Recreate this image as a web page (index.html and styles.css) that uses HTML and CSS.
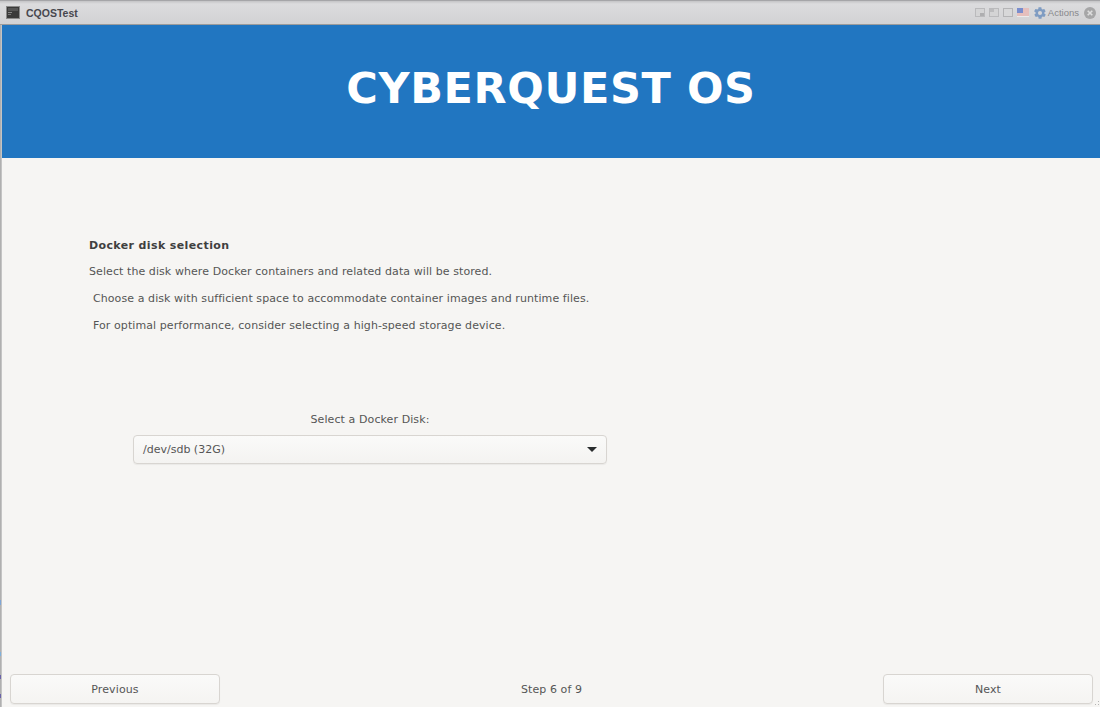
FILE: index.html
```html
<!DOCTYPE html>
<html lang="en">
<head>
<meta charset="utf-8">
<title>CQOSTest</title>
<link rel="stylesheet" href="styles.css">
</head>
<body>
<div class="window">
  <header class="titlebar">
    <div class="title-left">
      <svg class="app-icon" width="14" height="13" viewBox="0 0 14 13"><rect x=".5" y=".5" width="13" height="12" fill="#3a3a3a" stroke="#8a8a8a"/><rect x="2" y="2" width="10" height="3" fill="#555"/><rect x="2" y="6" width="4" height="1" fill="#888"/><rect x="2" y="8" width="3" height="1" fill="#777"/></svg>
      <span class="app-name">CQOSTest</span>
    </div>
    <div class="title-right">
      <svg class="win-icon" width="10" height="9" viewBox="0 0 10 9"><rect x=".5" y=".5" width="9" height="8" fill="#d4d4d5" stroke="#bababc"/><rect x="5" y="5" width="4" height="3" fill="#aeaeb0"/></svg>
      <svg class="win-icon" width="10" height="9" viewBox="0 0 10 9"><rect x=".5" y=".5" width="9" height="8" fill="#d4d4d5" stroke="#bababc"/><rect x="1" y="1" width="4" height="3" fill="#bcbcbe"/></svg>
      <svg class="win-icon" width="10" height="9" viewBox="0 0 10 9"><rect x=".5" y=".5" width="9" height="8" fill="#d8d8d9" stroke="#b4b4b6"/></svg>
      <svg class="flag" width="12" height="9" viewBox="0 0 12 9"><rect width="12" height="9" fill="#eee"/><path d="M0 1h12M0 3h12M0 5h12M0 7h12" stroke="#e08c86" stroke-width="1"/><rect width="6" height="5" fill="#7085cc"/></svg>
      <svg class="gear" width="14" height="14" viewBox="0 0 24 24"><path fill="#7f9cc2" d="M19.4 13c.1-.3.1-.7.1-1s0-.7-.1-1l2.100-1.600c.2-.1.2-.4.1-.6l-2-3.400c-.1-.2-.4-.3-.6-.2l-2.500 1c-.5-.4-1.100-.7-1.700-1l-.4-2.700c0-.3-.2-.5-.5-.5h-4c-.3 0-.5.2-.5.4l-.4 2.700c-.6.2-1.100.6-1.700 1l-2.500-1c-.2-.1-.5 0-.6.2l-2 3.400c-.1.3-.1.500.1.700L4.600 11c0 .3-.1.700-.1 1s0 .7.1 1l-2.100 1.600c-.2.1-.2.400-.1.600l2 3.400c.1.200.4.300.6.200l2.500-1c.5.400 1.100.700 1.700 1l.4 2.700c0 .2.200.400.500.400h4c.3 0 .5-.2.5-.4l.4-2.700c.6-.3 1.200-.6 1.700-1l2.500 1c.2.100.5 0 .6-.2l2-3.400c.1-.2.100-.5-.1-.6zM12 15.500a3.500 3.500 0 1 1 0-7 3.500 3.500 0 0 1 0 7z"/></svg>
      <span class="actions">Actions</span>
      <span class="close"><svg width="12" height="12" viewBox="0 0 12 12"><circle cx="6" cy="6" r="6" fill="#a6a6a7"/><path d="M3.700 3.700l4.600 4.600M8.300 3.700l-4.600 4.600" stroke="#dedede" stroke-width="1.600"/></svg></span>
    </div>
  </header>
  <section class="banner"><h1 class="brand">CYBERQUEST OS</h1></section>
  <main class="content">
    <div class="intro">
      <p class="heading">Docker disk selection</p>
      <p class="line">Select the disk where Docker containers and related data will be stored.</p>
      <p class="line indent">Choose a disk with sufficient space to accommodate container images and runtime files.</p>
      <p class="line indent">For optimal performance, consider selecting a high-speed storage device.</p>
    </div>
    <div class="picker">
      <label class="picker-label">Select a Docker Disk:</label>
      <div class="select"><span>/dev/sdb (32G)</span><i class="caret"></i></div>
    </div>
  </main>
  <footer class="footer">
    <button class="btn">Previous</button>
    <span class="step">Step 6 of 9</span>
    <button class="btn">Next</button>
    <svg class="grip" width="6" height="6" viewBox="0 0 6 6"><path d="M4 0h1v1H4zM1 3h1v1H1zM4 3h1v1H4z" fill="#b5b5b5"/></svg>
  </footer>
</div>
</body>
</html>
```
FILE: styles.css
```css
* { box-sizing: border-box; }
html, body { margin: 0; height: 100%; }
body { font-family: "DejaVu Sans", sans-serif; font-size: 11px; letter-spacing: .08px; color: #555; background: #f6f5f3; overflow: hidden; }
.window { position: relative; width: 1100px; height: 707px; display: flex; flex-direction: column; border-left: 2px solid #c4c4c4; background: #f6f5f3; }
.window::before { content: ""; position: absolute; left: -2px; top: 25px; bottom: 0; width: 1px; background: linear-gradient(#b0b0b0 0 575px, #7fa6d6 575px 580px, #b0b0b0 580px 627px, #7fb0dc 627px 631px, #b0b0b0 631px 650px, #6a62a8 650px 654px, #b0b0b0 654px 669px, #6a62a8 669px 673px, #b0b0b0 673px); }
.titlebar { height: 25px; flex: none; display: flex; justify-content: space-between; align-items: center; padding: 0 4px 0 5px; margin-left: -2px; background: linear-gradient(#c4c4c6 0, #dcdcde 3px, #d2d2d4 100%); border-top: 1px solid #a5a5a8; border-bottom: 1px solid #9b9b9b; }
.title-left { display: flex; align-items: center; gap: 6px; padding-left: 1px; }
.app-name { font-family: "Liberation Sans", sans-serif; font-size: 10.5px; font-weight: 700; letter-spacing: 0; color: #47474e; }
.title-right { display: flex; align-items: center; gap: 4px; }
.flag { opacity: .9; }
.actions { font-family: "Liberation Sans", sans-serif; font-size: 9.5px; letter-spacing: 0; color: #88888c; margin-left: -3px; margin-right: 1px; }
.close { display: flex; }
.banner { height: 133px; flex: none; display: flex; align-items: center; justify-content: center; padding-bottom: 8px; background: #2176c1; }
.brand { margin: 0; font-family: "DejaVu Sans", sans-serif; font-weight: 700; font-size: 43px; line-height: 52px; color: #fff; letter-spacing: .6px; }
.content { flex: 1; padding: 77px 0 0 87px; }
.intro p { margin: 0; height: 27px; line-height: 20px; }
.intro .heading { font-weight: 700; letter-spacing: .38px; color: #3f3f3f; line-height: 22px; }
.indent { padding-left: 4px; }
.picker { margin-top: 69px; margin-left: 44px; width: 474px; display: flex; flex-direction: column; align-items: center; gap: 7px; }
.picker-label { line-height: 16px; letter-spacing: .09px; }
.select { width: 100%; height: 29px; display: flex; align-items: center; justify-content: space-between; padding: 0 9px; letter-spacing: 0; background: linear-gradient(#fafaf9, #f4f3f1); border: 1px solid #d8d5d1; border-radius: 4px; box-shadow: 0 1px 1px rgba(0,0,0,.05); }
.caret { width: 0; height: 0; border-left: 5.5px solid transparent; border-right: 5.5px solid transparent; border-top: 5px solid #2a2d2e; }
.footer { height: 33px; flex: none; display: flex; justify-content: space-between; align-items: flex-start; padding: 0 7px 0 8px; }
.btn { width: 210px; height: 30px; font: inherit; letter-spacing: .12px; color: #555; background: linear-gradient(#fafaf9, #f5f4f2); border: 1px solid #d8d5d1; border-radius: 4px; box-shadow: 0 1px 1px rgba(0,0,0,.05); }
.step { line-height: 32px; letter-spacing: .09px; }
.grip { position: absolute; right: 0; bottom: 0; }
```
